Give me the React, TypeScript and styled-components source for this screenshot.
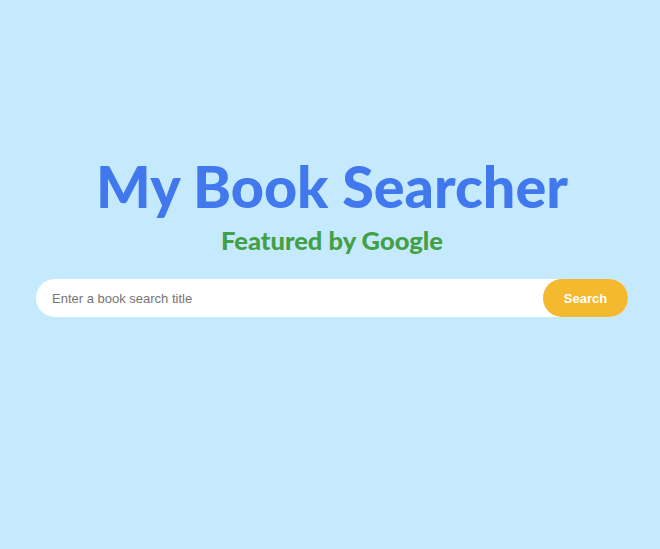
import React, { useState } from "react";
import styled, { createGlobalStyle } from "styled-components";

const GlobalStyle = createGlobalStyle`
  html, body {
    margin: 0;
    padding: 0;
    background: #c5eafd;
  }
  * {
    box-sizing: border-box;
  }
`;

const Page = styled.main`
  width: 100%;
  min-height: 549px;
  display: flex;
  flex-direction: column;
  align-items: center;
  padding: 150px 32px 0 36px;
`;

const Title = styled.h1`
  margin: 0;
  font-family: Lato, "Noto Sans", sans-serif;
  font-weight: 900;
  font-size: 57.5px;
  line-height: 72px;
  color: #4178ee;
`;

const Subtitle = styled.h2`
  margin: 3px 0 0;
  font-family: Lato, "Noto Sans", sans-serif;
  font-weight: 900;
  font-size: 25.5px;
  line-height: 30px;
  color: #43a047;
`;

const SearchForm = styled.form`
  margin-top: 24px;
  width: 100%;
  display: flex;
  align-items: stretch;
  height: 38px;
  background: #fff;
  border-radius: 19px;
`;

const SearchInput = styled.input`
  flex: 1;
  border: none;
  outline: none;
  background: transparent;
  padding: 0 16px;
  font-family: "Liberation Sans", Arial, sans-serif;
  font-size: 13px;
  color: #333;

  &::placeholder {
    color: #757575;
  }
`;

const SearchButton = styled.button`
  width: 85px;
  border: none;
  border-radius: 19px;
  background: #f4b92f;
  color: #fff;
  font-family: "Liberation Sans", Arial, sans-serif;
  font-weight: 700;
  font-size: 13px;
  cursor: pointer;
`;

export default function App() {
  const [query, setQuery] = useState("");

  return (
    <>
      <GlobalStyle />
      <Page>
        <Title>My Book Searcher</Title>
        <Subtitle>Featured by Google</Subtitle>
        <SearchForm onSubmit={(e) => e.preventDefault()}>
          <SearchInput
            type="text"
            placeholder="Enter a book search title"
            value={query}
            onChange={(e) => setQuery(e.target.value)}
          />
          <SearchButton type="submit">Search</SearchButton>
        </SearchForm>
      </Page>
    </>
  );
}
